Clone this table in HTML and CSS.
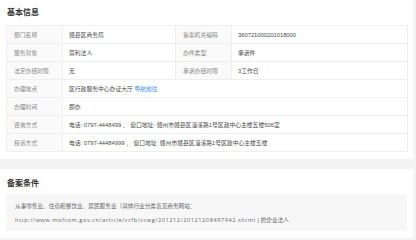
FILE: index.html
```html
<!DOCTYPE html>
<html>
<head>
<meta charset="utf-8">
<link rel="stylesheet" href="styles.css">
</head>
<body>
<div class="page">
  <section class="card">
    <div class="card-title">基本信息</div>
    <table class="info">
      <colgroup>
        <col class="c-label"><col class="c-val1"><col class="c-label"><col class="c-val2">
      </colgroup>
      <tr>
        <td class="lbl">部门名称</td><td class="val">赣县区商务局</td>
        <td class="lbl">备案机关编码</td><td class="val">360721000201018000</td>
      </tr>
      <tr>
        <td class="lbl">服务对象</td><td class="val">营利法人</td>
        <td class="lbl">办件类型</td><td class="val">承诺件</td>
      </tr>
      <tr>
        <td class="lbl">法定办结时限</td><td class="val">无</td>
        <td class="lbl">承诺办结时限</td><td class="val">3工作日</td>
      </tr>
      <tr>
        <td class="lbl">办理地点</td><td class="val" colspan="3">区行政服务中心办证大厅 <a class="link">导航前往</a></td>
      </tr>
      <tr>
        <td class="lbl">办理时间</td><td class="val" colspan="3">即办</td>
      </tr>
      <tr>
        <td class="lbl">咨询方式</td><td class="val" colspan="3">电话: 0797-4448499 、 窗口地址: 赣州市赣县区潼溪路1号区政中心主楼五楼506室</td>
      </tr>
      <tr>
        <td class="lbl">投诉方式</td><td class="val" colspan="3">电话: 0797-44484999 、 窗口地址: 赣州市赣县区潼溪路1号区政中心主楼五楼</td>
      </tr>
    </table>
  </section>
  <section class="card">
    <div class="card-title cond-title">备案条件</div>
    <div class="cond-box">
      <p>从事零售业、住宿和餐饮业、居民服务业（具体行业分类表见商务网站：</p>
      <p><span class="url">http://www.mofcom.gov.cn/article/zcfb/zcwg/201212/20121208497942.shtml</span> ) 的企业法人</p>
    </div>
  </section>
</div>
</body>
</html>
```
FILE: styles.css
```css
html, body {
  margin: 0;
  padding: 0;
}
body {
  background: #f3f3f3;
  font-family: "Liberation Sans", "Noto Sans CJK SC", sans-serif;
  color: #555;
}
.page {
  width: 413px;
  display: flex;
  flex-direction: column;
  gap: 10px;
}
.card {
  background: #fff;
  padding: 0 6px 7px;
}
.card-title {
  height: 25px;
  line-height: 26px;
  font-size: 8px;
  font-weight: bold;
  color: #333;
  padding-left: 1px;
}
.cond-title {
  height: 23px;
  padding-top: 2px;
}
.info {
  width: 401px;
  border-collapse: collapse;
  table-layout: fixed;
}
.c-label { width: 56px; }
.c-val1 { width: 113px; }
.c-val2 { width: 176px; }
.info tr {
  height: 18px;
}
.info td {
  border: 1px solid #efefef;
  padding: 0 7px;
  font-size: 5.8px;
  white-space: nowrap;
  overflow: hidden;
}
.info .lbl {
  background: #fafafa;
  color: #888;
}
.info .val {
  color: #4a4a4a;
  padding-left: 6px;
}
.link {
  color: #3f8fe8;
}
.cond-box {
  background: #f7f7f7;
  padding: 5px 9px 4px;
  font-size: 5.65px;
  line-height: 14px;
  color: #666;
}
.cond-box p {
  margin: 0;
  white-space: nowrap;
}
.url {
  font-family: "Open Sans", sans-serif;
  letter-spacing: 0.55px;
}
```
